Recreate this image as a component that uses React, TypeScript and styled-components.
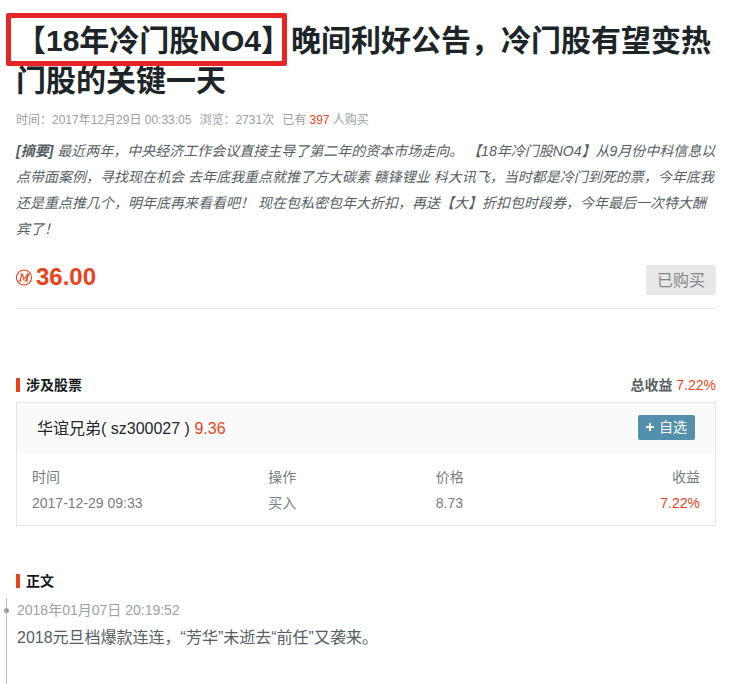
import React from "react";
import styled, { createGlobalStyle } from "styled-components";

const GlobalStyle = createGlobalStyle`
  * { box-sizing: border-box; }
  body {
    margin: 0;
    background: #fff;
    color: #566064;
    font-family: "Liberation Sans", "Noto Sans CJK SC", sans-serif;
    font-size: 14px;
  }
  button { font-family: inherit; }
`;

const Page = styled.main`
  display: flex;
  flex-direction: column;
  min-height: 100vh;
  padding: 21px 21px 0 16px;
`;

const Title = styled.h1`
  margin: 0 0 9px;
  color: #1d2529;
  font-size: 30px;
  font-weight: 700;
  line-height: 40px;
`;

const Marked = styled.span`
  position: relative;
  white-space: nowrap;

  &::after {
    content: "";
    position: absolute;
    top: -11px;
    right: 4px;
    bottom: -9px;
    left: -10px;
    border: 5px solid #e62626;
    border-radius: 2px;
    pointer-events: none;
  }
`;

const Meta = styled.div`
  display: flex;
  flex-wrap: wrap;
  gap: 0 8px;
  margin-bottom: 8px;
  color: #97a0a4;
  font-size: 12px;
  line-height: 20px;
`;

const Accent = styled.span`
  color: #e8441b;
`;

const Summary = styled.p`
  margin: 0;
  font-style: italic;
  line-height: 26px;
`;

const PriceRow = styled.div`
  display: flex;
  justify-content: space-between;
  align-items: center;
  margin-top: 23px;
  padding-bottom: 13px;
  border-bottom: 1px solid #e4e4e4;
`;

const Price = styled.strong`
  display: flex;
  align-items: center;
  gap: 3px;
  height: 24px;
  margin-bottom: 6px;
  color: #e8441b;
  font-size: 24px;
  line-height: 24px;
`;

const BoughtButton = styled.button`
  height: 30px;
  padding: 0 11px;
  border: 0;
  border-radius: 2px;
  background: #e8e8e8;
  color: #84888a;
  font-size: 16px;
  line-height: 32px;
`;

const SectionHead = styled.header<{ $gap: number }>`
  display: flex;
  justify-content: space-between;
  align-items: center;
  margin-top: ${(p) => p.$gap}px;
  line-height: 20px;
`;

const SectionTitle = styled.h2`
  display: flex;
  align-items: center;
  gap: 6px;
  margin: 0;
  color: #14191c;
  font-size: 14px;
  line-height: 20px;

  &::before {
    content: "";
    width: 4px;
    height: 14px;
    background: #e8441b;
  }
`;

const Card = styled.section`
  margin-top: 7px;
  padding-bottom: 9px;
  border: 1px solid #e4e4e4;
`;

const CardHead = styled.div`
  display: flex;
  justify-content: space-between;
  align-items: center;
  height: 50px;
  margin-bottom: 11px;
  padding: 0 20px 2px;
  background: #fafafa;
  color: #22292d;
  font-size: 16px;
`;

const AddButton = styled.button`
  display: flex;
  align-items: center;
  gap: 5px;
  height: 25px;
  padding: 0 8px;
  border: 0;
  border-radius: 2px;
  background: #5390ae;
  color: #fff;
  font-size: 14px;
  line-height: 24px;
`;

const Trades = styled.table`
  width: 100%;
  border-collapse: collapse;
  table-layout: fixed;
  color: #777c7f;
  line-height: 26px;
`;

const cell = `
  padding: 0;
  font-weight: 400;
  text-align: left;
  &:first-child { width: 36%; padding-left: 15px; }
  &:nth-child(2) { width: 24%; }
  &:last-child { padding-right: 15px; text-align: right; }
`;

const Th = styled.th`${cell}`;
const Td = styled.td`${cell}`;

const Timeline = styled.div`
  flex: 1;
  margin: 7px 0 0 -10px;
  padding-left: 10px;
  border-left: 1px solid #bcc0c2;
`;

const Stamp = styled.time`
  position: relative;
  display: block;
  color: #9ba1a4;
  line-height: 24px;

  &::before {
    content: "";
    position: absolute;
    top: 10px;
    left: -13px;
    width: 5px;
    height: 5px;
    border-radius: 50%;
    background: #979ea2;
  }
`;

const Body = styled.p`
  margin: 3px 0 0;
  font-size: 16px;
  line-height: 26px;
`;

const CoinIcon = () => (
  <svg width="17" height="17" viewBox="0 0 17 17" fill="none" stroke="#e8441b" aria-hidden="true">
    <circle cx="8" cy="8.5" r="7.5" strokeWidth="1.1" />
    <path d="M4.4 5h2.2M11 5h3M2.4 12h3M8.4 12h3.4" strokeWidth="1.1" />
    <path d="M6 5 4 12M6.3 5l1.5 5.4L12 5" strokeWidth="1.1" />
    <path d="M12.2 5 10.3 12" strokeWidth="1.7" />
  </svg>
);

const PlusIcon = () => (
  <svg width="8" height="8" viewBox="0 0 8 8" stroke="#fff" strokeWidth="2" aria-hidden="true">
    <path d="M4 0v8M0 4h8" />
  </svg>
);

export default function App() {
  return (
    <>
      <GlobalStyle />
      <Page lang="zh-CN">
        <Title>
          <Marked>【18年冷门股NO4】</Marked>晚间利好公告，冷门股有望变热门股的关键一天
        </Title>
        <Meta>
          <span>时间：2017年12月29日 00:33:05</span>
          <span>浏览：2731次</span>
          <span>已有 <Accent>397</Accent> 人购买</span>
        </Meta>
        <Summary>
          <strong>[摘要]</strong> 最近两年，中央经济工作会议直接主导了第二年的资本市场走向。 【18年冷门股NO4】从9月份中科信息以点带面案例，寻找现在机会 去年底我重点就推了方大碳素 赣锋锂业 科大讯飞，当时都是冷门到死的票，今年底我还是重点推几个，明年底再来看看吧！ 现在包私密包年大折扣，再送【大】折扣包时段券，今年最后一次特大酬宾了！
        </Summary>
        <PriceRow>
          <Price><CoinIcon />36.00</Price>
          <BoughtButton type="button">已购买</BoughtButton>
        </PriceRow>

        <SectionHead $gap={66}>
          <SectionTitle>涉及股票</SectionTitle>
          <span><strong>总收益</strong> <Accent>7.22%</Accent></span>
        </SectionHead>
        <Card>
          <CardHead>
            <span>华谊兄弟( sz300027 ) <Accent>9.36</Accent></span>
            <AddButton type="button"><PlusIcon />自选</AddButton>
          </CardHead>
          <Trades>
            <thead>
              <tr><Th>时间</Th><Th>操作</Th><Th>价格</Th><Th>收益</Th></tr>
            </thead>
            <tbody>
              <tr><Td>2017-12-29 09:33</Td><Td>买入</Td><Td>8.73</Td><Td><Accent>7.22%</Accent></Td></tr>
            </tbody>
          </Trades>
        </Card>

        <SectionHead $gap={45}>
          <SectionTitle>正文</SectionTitle>
        </SectionHead>
        <Timeline>
          <Stamp dateTime="2018-01-07T20:19:52">2018年01月07日 20:19:52</Stamp>
          <Body>2018元旦档爆款连连，“芳华”未逝去“前任”又袭来。</Body>
        </Timeline>
      </Page>
    </>
  );
}
